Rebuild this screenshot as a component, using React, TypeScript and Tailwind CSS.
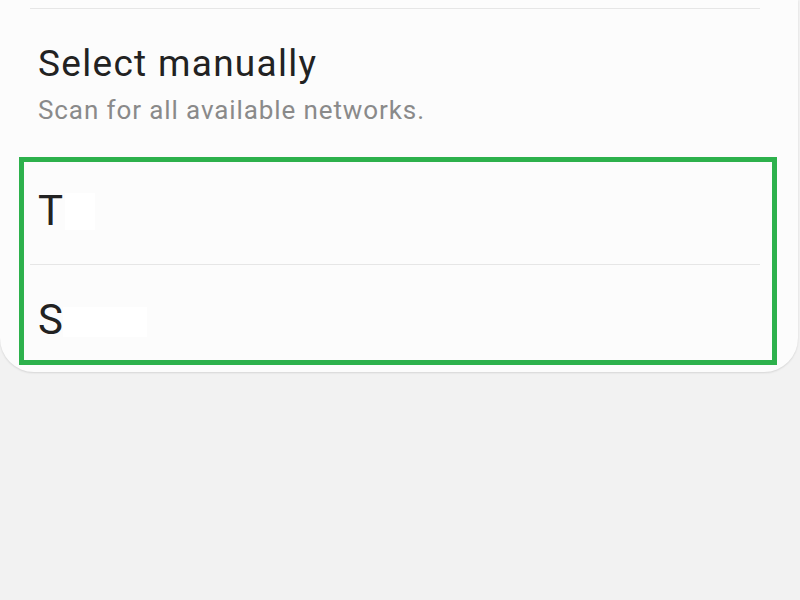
export default function App() {
  return (
    <main className="h-[600px] w-[800px] bg-[#f2f2f2] font-['Roboto',sans-serif] overflow-hidden">
      <div className="w-[798px] h-[372px] bg-[#fcfcfc] rounded-b-[34px] shadow-[0_1px_2px_rgba(0,0,0,0.12)] pt-[8px]">
        <div className="ml-[30px] mr-[38px] h-px bg-[#e6e6e6]" />

        {/* Select manually */}
        <div className="pl-[38px] pt-[34px]">
          <p className="text-[37px] leading-[42px] tracking-[1.3px] text-[#222222]">Select manually</p>
          <p className="mt-[9px] text-[26px] leading-[32px] tracking-[0.9px] text-[#8a8a8a]">Scan for all available networks.</p>
        </div>

        {/* network list, highlighted */}
        <div className="ml-[19px] mr-[21px] mt-[31px] border-[5px] border-[#2db14c]">
          <div className="h-[102px] pl-[14px] pb-[4px] flex items-center">
            <span className="text-[42px] leading-[48px] text-[#222222]">T</span>
            <span className="inline-block w-[30px] h-[37px] bg-white ml-[2px]" />
          </div>
          <div className="ml-[6px] mr-[12px] h-px bg-[#e6e6e6]" />
          <div className="h-[95px] pl-[14px] pt-[14px] flex items-center">
            <span className="text-[42px] leading-[48px] text-[#222222]">S</span>
            <span className="inline-block w-[84px] h-[30px] bg-white mt-[4px]" />
          </div>
        </div>
      </div>
    </main>
  )
}
